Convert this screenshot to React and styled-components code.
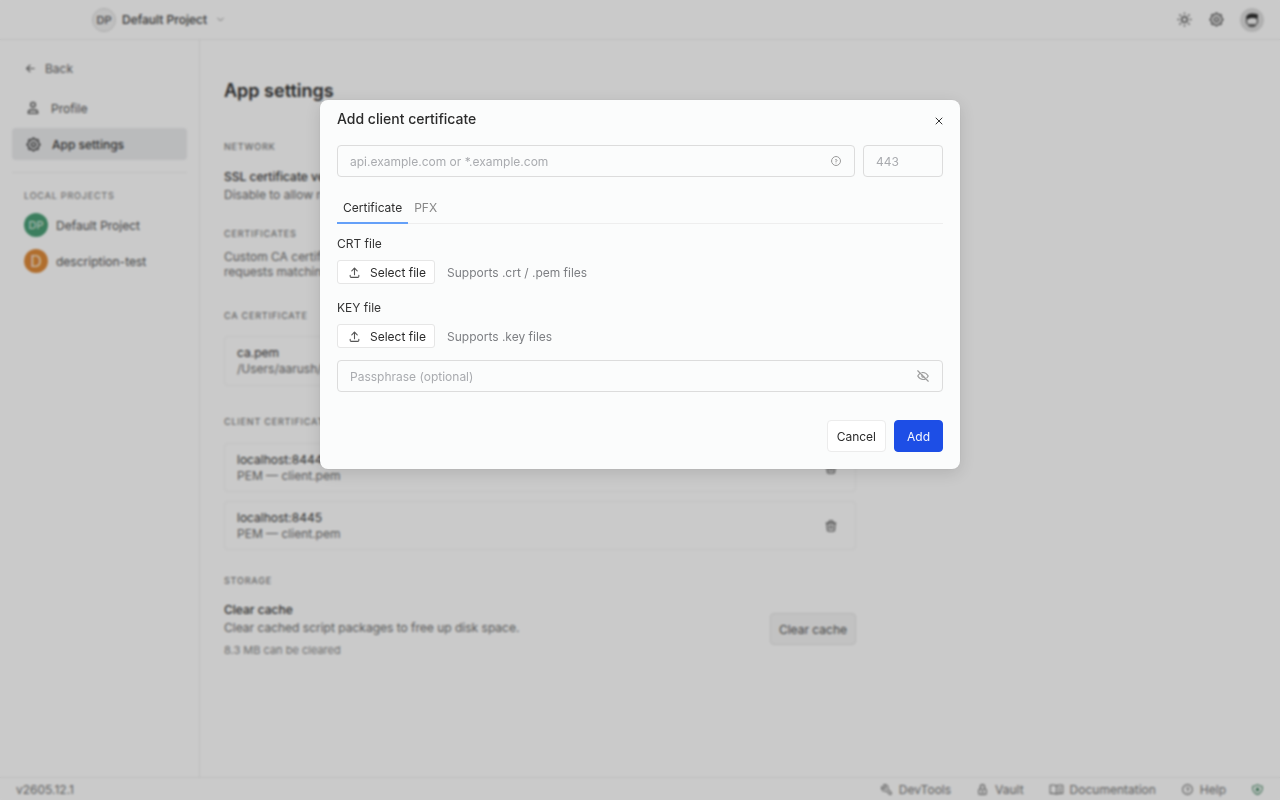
import React from 'react'
import styled, { createGlobalStyle } from 'styled-components'
import {
  TbArrowLeft, TbSettings, TbChevronDown, TbSun, TbTool, TbLock,
  TbHelpCircle, TbTrash, TbUpload, TbEyeOff, TbX,
} from 'react-icons/tb'

const Global = createGlobalStyle`
  html, body { margin: 0; padding: 0; height: 100%; }
  body { font-family: Inter, "Noto Sans", sans-serif; font-size: 12px; color: #343434; background: #fdfdfd; overflow: hidden; }
  * { box-sizing: border-box; }
`

const Shell = styled.div`
  width: 1280px;
  height: 800px;
  display: flex;
  flex-direction: column;
`

const TopBar = styled.header`
  height: 40px;
  flex: none;
  display: flex;
  align-items: center;
  justify-content: space-between;
  padding: 0 16px 0 92px;
  border-bottom: 1px solid #ececec;
`

const ProjectPicker = styled.div`
  display: flex;
  align-items: center;
  gap: 6px;
  font-size: 12px;
  font-weight: 500;
  color: #444;
  svg { margin-left: 2px; color: #888; }
`

const Avatar = styled.span`
  width: ${p => p.$size}px;
  height: ${p => p.$size}px;
  flex: none;
  display: flex;
  align-items: center;
  justify-content: center;
  border-radius: 50%;
  background: ${p => p.$bg};
  color: ${p => p.$fg};
  border: ${p => (p.$outlined ? '1px solid #d8d8d8' : 'none')};
  font-size: ${p => p.$font}px;
`

const TopActions = styled.div`
  display: flex;
  align-items: center;
  gap: 12px;
  color: #555;
`

const TopIcon = styled.span`
  width: ${p => p.$size || 20}px;
  height: ${p => p.$size || 20}px;
  margin-left: ${p => p.$left || 0}px;
  display: flex;
  align-items: center;
  justify-content: center;
`

const Body = styled.div`
  flex: 1;
  display: flex;
  min-height: 0;
`

const Sidebar = styled.aside`
  width: 200px;
  flex: none;
  padding: 16px 12px 0;
  border-right: 1px solid #ececec;
`

const BackLink = styled.div`
  height: 24px;
  display: flex;
  align-items: center;
  gap: 8px;
  padding-left: 12px;
  color: #666;
  font-size: 12px;
  margin-bottom: 12px;
`

const NavItem = styled.div`
  height: 32px;
  display: flex;
  align-items: center;
  gap: 10px;
  padding-left: 13px;
  margin-bottom: 4px;
  border-radius: 4px;
  font-size: 12px;
  color: ${p => (p.$active ? '#3a3a3a' : '#555')};
  font-weight: ${p => (p.$active ? 500 : 400)};
  background: ${p => (p.$active ? '#e9eaec' : 'transparent')};
`

const SideDivider = styled.div`
  height: 1px;
  background: #eeeeee;
  margin: 12px 0 16px;
`

const SideHeading = styled.div`
  padding-left: 12px;
  font-size: 9px;
  font-weight: 500;
  letter-spacing: 0.8px;
  color: #8b8b8b;
  margin-bottom: 4px;
  line-height: 14px;
`

const ProjectRow = styled.div`
  height: 36px;
  display: flex;
  align-items: center;
  gap: 8px;
  padding-left: 12px;
  font-size: 12px;
  color: #555;
`

const Main = styled.main`
  flex: 1;
  padding: 38px 0 0 24px;
`

const Column = styled.div`
  width: 632px;
`

const Title = styled.h1`
  margin: 0 0 37px;
  font-size: 18px;
  line-height: 26px;
  font-weight: 600;
  color: #343434;
`

const SectionLabel = styled.div`
  font-size: 9px;
  line-height: 12px;
  font-weight: 500;
  letter-spacing: 0.8px;
  color: #7e7e7e;
  margin-top: ${p => p.$top || 0}px;
  margin-bottom: ${p => p.$bottom || 0}px;
`

const RowTitle = styled.div`
  font-size: 12px;
  line-height: 18px;
  font-weight: ${p => (p.$plain ? 400 : 500)};
  color: #3a3a3a;
  white-space: nowrap;
`

const Muted = styled.div`
  font-size: 12px;
  line-height: ${p => p.$line || 18}px;
  color: #6f6f6f;
  white-space: nowrap;
`

const CardLine = styled(RowTitle)`
  line-height: 16px;
  font-weight: 400;
`

const CardSub = styled(Muted)`
  line-height: 16px;
`

const Card = styled.div`
  height: ${p => p.$height || 49}px;
  margin-bottom: 9px;
  padding: 8px 17px 8px 12px;
  display: flex;
  align-items: center;
  justify-content: space-between;
  border: 1px solid #f0f0f0;
  border-radius: 4px;
  color: #555;
`

const StorageRow = styled.div`
  display: flex;
  align-items: center;
  justify-content: space-between;
`

const Tiny = styled.div`
  font-size: 11px;
  line-height: 14px;
  color: #8b8b8b;
  margin-top: 6px;
`

const ClearButton = styled.div`
  height: 32px;
  display: flex;
  align-items: center;
  padding: 0 8px;
  font-size: 12px;
  color: #555;
  background: #f3f3f3;
  border: 1px solid #e2e2e2;
  border-radius: 4px;
`

const StatusBar = styled.footer`
  height: 23px;
  flex: none;
  display: flex;
  align-items: center;
  justify-content: space-between;
  padding: 0 16px;
  border-top: 1px solid #ececec;
  font-size: 12px;
  color: #777;
`

const StatusLinks = styled.div`
  display: flex;
  align-items: center;
  gap: 25px;
`

const StatusLink = styled.span`
  display: flex;
  align-items: center;
  gap: 6px;
  color: ${p => p.$color || 'inherit'};
`

const Backdrop = styled.div`
  position: fixed;
  inset: 0;
  background: rgba(0, 0, 0, 0.2);
  backdrop-filter: blur(1px);
`

const Modal = styled.section`
  position: fixed;
  left: 320px;
  top: 100px;
  width: 640px;
  height: 369px;
  padding: 0 17px;
  display: flex;
  flex-direction: column;
  background: #fbfcfc;
  border-radius: 8px;
  box-shadow: 0 4px 16px rgba(0, 0, 0, 0.12), 0 0 0 1px rgba(0, 0, 0, 0.02);
`

const ModalHead = styled.div`
  height: 45px;
  flex: none;
  display: flex;
  align-items: center;
  justify-content: space-between;
  padding-bottom: 9px;
  font-size: 14px;
  font-weight: 500;
  color: #2b2b2b;
  svg { color: #333; margin-top: 5px; margin-right: -2px; }
`

const InputRow = styled.div`
  display: flex;
  gap: 8px;
  margin-bottom: 14px;
`

const Field = styled.div`
  height: 32px;
  flex: ${p => (p.$width ? `0 0 ${p.$width}` : '0 0 auto')};
  flex-grow: ${p => (p.$grow ? 1 : 0)};
  display: flex;
  align-items: center;
  justify-content: space-between;
  padding: 0 12px;
  font-size: 12px;
  color: #a9abaf;
  border: 1px solid #dcdcdc;
  border-radius: 4px;
  svg { color: #9c9c9c; flex: none; }
`

const Tabs = styled.div`
  height: 33px;
  display: flex;
  border-bottom: 1px solid #eeeeee;
  margin-bottom: 11px;
`

const Tab = styled.div`
  height: 33px;
  display: flex;
  align-items: center;
  padding: 2px 6px 0;
  font-size: 12px;
  color: ${p => (p.$active ? '#2f2f2f' : '#888')};
  border-bottom: 2px solid ${p => (p.$active ? '#64a0f8' : 'transparent')};
`

const FieldLabel = styled.div`
  font-size: 12px;
  line-height: 18px;
  color: #343434;
  margin-bottom: 7px;
`

const FileRow = styled.div`
  display: flex;
  align-items: center;
  gap: 12px;
  margin-bottom: ${p => p.$bottom}px;
`

const SelectButton = styled.div`
  height: 24px;
  width: 98px;
  display: flex;
  align-items: center;
  gap: 9px;
  padding-left: 10px;
  font-size: 12px;
  color: #2b2b2b;
  background: #fff;
  border: 1px solid #e6e6e6;
  border-radius: 3px;
  svg { color: #555; }
`

const Hint = styled.span`
  font-size: 12px;
  color: #7d7f83;
`

const ModalFoot = styled.div`
  display: flex;
  justify-content: flex-end;
  gap: 8px;
  margin-top: 28px;
`

const FootButton = styled.div`
  height: 32px;
  display: flex;
  align-items: center;
  padding: 0 ${p => (p.$primary ? 12 : 9)}px;
  font-size: 12px;
  border-radius: 4px;
  color: ${p => (p.$primary ? '#f4f6fe' : '#2b2b2b')};
  background: ${p => (p.$primary ? '#1d4ee6' : '#fff')};
  border: 1px solid ${p => (p.$primary ? '#1d4ee6' : '#ececec')};
`

function UserAvatar() {
  return (
    <svg width="24" height="24" viewBox="0 0 24 24">
      <circle cx="12" cy="12" r="12" fill="#dcdcdc" />
      <circle cx="12" cy="13" r="5.5" fill="#f2f2f2" stroke="#333" strokeWidth="1" />
      <path d="M6 10 C6.5 5 13 4.5 18 6.5 L17.5 11 C14 9.5 10 9.5 7.5 11.5 Z" fill="#2e2e2e" />
      <path d="M8.5 18 C10 19.5 14 19.5 15.5 18 L15.5 16 L8.5 16 Z" fill="#666" />
    </svg>
  )
}

function ProfileIcon() {
  return (
    <svg width="16" height="16" viewBox="0 0 24 24" fill="none" stroke="currentColor" strokeWidth="2">
      <circle cx="12" cy="7" r="3.5" />
      <path d="M5 20v-1a4 4 0 0 1 4-4h6a4 4 0 0 1 4 4v1z" strokeLinejoin="round" />
    </svg>
  )
}

function DocsIcon() {
  return (
    <svg width="15" height="13" viewBox="0 0 26 22" fill="none" stroke="currentColor" strokeWidth="1.8">
      <path d="M13 4.5C10 3 6 3 2 3.5v14.5c4-.5 8-.5 11 1c3-1.5 7-1.5 11-1V3.5c-4-.5-8-.5-11 1z" strokeLinejoin="round" />
      <path d="M13 4.5V19M16.5 8h4M16.5 11.5h4M16.5 15h4" />
    </svg>
  )
}

function ShieldIcon() {
  return (
    <svg width="13" height="13" viewBox="0 0 24 24" fill="none" stroke="currentColor" strokeWidth="2">
      <path d="M12 3a12 12 0 0 0 8.5 3a12 12 0 0 1-8.5 15a12 12 0 0 1-8.5-15a12 12 0 0 0 8.5-3" strokeLinejoin="round" />
      <circle cx="12" cy="12" r="3.5" fill="currentColor" stroke="none" />
    </svg>
  )
}

export default function App() {
  return (
    <>
      <Global />
      <Shell>
        <TopBar>
          <ProjectPicker>
            <Avatar $size={24} $bg="#efefef" $fg="#555" $font={11} $outlined>DP</Avatar>
            Default Project
            <TbChevronDown size={11} />
          </ProjectPicker>
          <TopActions>
            <TopIcon><TbSun size={17} /></TopIcon>
            <TopIcon><TbSettings size={17} /></TopIcon>
            <TopIcon $size={24} $left={2}><UserAvatar /></TopIcon>
          </TopActions>
        </TopBar>
        <Body>
          <Sidebar>
            <BackLink><TbArrowLeft size={13} />Back</BackLink>
            <NavItem><ProfileIcon />Profile</NavItem>
            <NavItem $active><TbSettings size={17} />App settings</NavItem>
            <SideDivider />
            <SideHeading>LOCAL PROJECTS</SideHeading>
            <ProjectRow>
              <Avatar $size={24} $bg="#4b9e76" $fg="#e6f0ea" $font={11}>DP</Avatar>
              Default Project
            </ProjectRow>
            <ProjectRow>
              <Avatar $size={24} $bg="#dd8a3a" $fg="#f8eadb" $font={16}>D</Avatar>
              description-test
            </ProjectRow>
          </Sidebar>
          <Main>
            <Column>
              <Title>App settings</Title>
              <SectionLabel $bottom={15}>NETWORK</SectionLabel>
              <RowTitle>SSL certificate verification</RowTitle>
              <Muted>Disable to allow requests to servers using self-signed certificates.</Muted>
              <SectionLabel $top={24} $bottom={9}>CERTIFICATES</SectionLabel>
              <Muted $line={15}>Custom CA certificates are trusted in addition to the system store.</Muted>
              <Muted $line={15}>requests matching the domain use the client certificate.</Muted>
              <SectionLabel $top={31} $bottom={14}>CA CERTIFICATE</SectionLabel>
              <Card $height={50}>
                <div>
                  <CardLine>ca.pem</CardLine>
                  <CardSub>/Users/aarush/certs/ca.pem</CardSub>
                </div>
              </Card>
              <SectionLabel $top={30} $bottom={15}>CLIENT CERTIFICATES</SectionLabel>
              <Card>
                <div>
                  <CardLine>localhost:8444</CardLine>
                  <CardSub>PEM — client.pem</CardSub>
                </div>
                <TbTrash size={14} />
              </Card>
              <Card>
                <div>
                  <CardLine>localhost:8445</CardLine>
                  <CardSub>PEM — client.pem</CardSub>
                </div>
                <TbTrash size={14} />
              </Card>
              <SectionLabel $top={25} $bottom={14}>STORAGE</SectionLabel>
              <StorageRow>
                <div>
                  <RowTitle>Clear cache</RowTitle>
                  <Muted>Clear cached script packages to free up disk space.</Muted>
                  <Tiny>8.3 MB can be cleared</Tiny>
                </div>
                <ClearButton>Clear cache</ClearButton>
              </StorageRow>
            </Column>
          </Main>
        </Body>
        <StatusBar>
          <span>v2605.12.1</span>
          <StatusLinks>
            <StatusLink><TbTool size={13} />DevTools</StatusLink>
            <StatusLink><TbLock size={13} />Vault</StatusLink>
            <StatusLink><DocsIcon />Documentation</StatusLink>
            <StatusLink><TbHelpCircle size={13} />Help</StatusLink>
            <StatusLink $color="#4b8a68"><ShieldIcon /></StatusLink>
          </StatusLinks>
        </StatusBar>
      </Shell>
      <Backdrop />
      <Modal>
        <ModalHead>
          Add client certificate
          <TbX size={12} />
        </ModalHead>
        <InputRow>
          <Field $grow>
            api.example.com or *.example.com
            <TbHelpCircle size={12} />
          </Field>
          <Field $width="80px">443</Field>
        </InputRow>
        <Tabs>
          <Tab $active>Certificate</Tab>
          <Tab>PFX</Tab>
        </Tabs>
        <FieldLabel>CRT file</FieldLabel>
        <FileRow $bottom={15}>
          <SelectButton><TbUpload size={13} />Select file</SelectButton>
          <Hint>Supports .crt / .pem files</Hint>
        </FileRow>
        <FieldLabel>KEY file</FieldLabel>
        <FileRow $bottom={12}>
          <SelectButton><TbUpload size={13} />Select file</SelectButton>
          <Hint>Supports .key files</Hint>
        </FileRow>
        <Field>
          Passphrase (optional)
          <TbEyeOff size={14} />
        </Field>
        <ModalFoot>
          <FootButton>Cancel</FootButton>
          <FootButton $primary>Add</FootButton>
        </ModalFoot>
      </Modal>
    </>
  )
}
